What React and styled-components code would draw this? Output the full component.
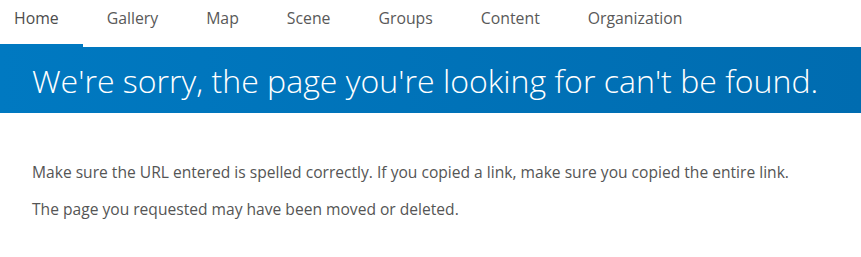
import React from 'react'
import styled, { createGlobalStyle } from 'styled-components'

const GlobalStyle = createGlobalStyle`
    body {
        margin: 0;
        background: #fff;
        font-family: "Open Sans", "Liberation Sans", sans-serif;
    }
`

const Nav = styled.nav`
    display: flex;
    height: 47px;
`

const Tab = styled.a`
    display: flex;
    align-items: center;
    box-sizing: border-box;
    height: 47px;
    padding: 0 24px 9px;
    font-size: 15.8px;
    color: ${props => props.$active ? '#4c4c4c' : '#595959'};
    border-bottom: 3px solid ${props => props.$active ? '#0079c1' : 'transparent'};
    text-decoration: none;
    white-space: nowrap;

    &:first-child {
        padding-left: 14px;
    }
`

const Banner = styled.header`
    height: 66px;
    display: flex;
    align-items: center;
    padding: 0 32px;
    background: linear-gradient(90deg, #0079c1 0%, #006cb0 100%);
`

const Title = styled.h1`
    margin: 0;
    font-size: 32.1px;
    font-weight: 300;
    color: #fff;
    white-space: nowrap;
`

const Body = styled.main`
    padding: 50px 32px 0;
    display: flex;
    flex-direction: column;
    gap: 18px;
`

const Text = styled.p`
    margin: 0;
    font-size: 15.6px;
    color: #555;
    line-height: 19px;
`

const tabs = ['Home', 'Gallery', 'Map', 'Scene', 'Groups', 'Content', 'Organization']

const App = () => {
    return (
        <>
            <GlobalStyle />
            <Nav>
                {tabs.map((t, i) => (
                    <Tab key={t} $active={i === 0}>{t}</Tab>
                ))}
            </Nav>
            <Banner>
                <Title>We're sorry, the page you're looking for can't be found.</Title>
            </Banner>
            <Body>
                <Text>Make sure the URL entered is spelled correctly. If you copied a link, make sure you copied the entire link.</Text>
                <Text>The page you requested may have been moved or deleted.</Text>
            </Body>
        </>
    )
}

export default App
